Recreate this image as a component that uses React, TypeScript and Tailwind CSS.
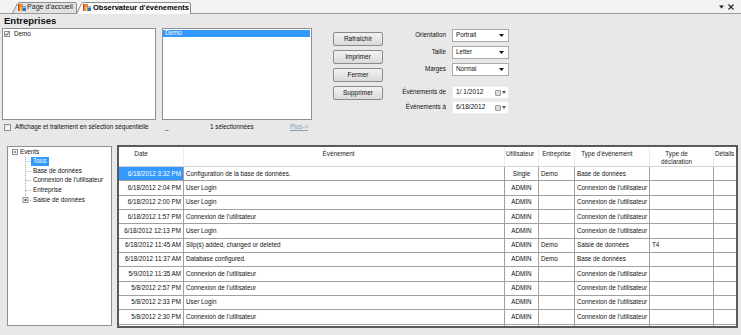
import React from "react";

type Row = { d: string; e: string; u: string; c: string; t: string; k: string; sel?: boolean };

const CONN = "Connexion de l'utilisateur";
const rows: Row[] = [
  { d: "6/18/2012 3:32 PM", e: "Configuration de la base de données.", u: "Single", c: "Demo", t: "Base de données", k: "", sel: true },
  { d: "6/18/2012 2:04 PM", e: "User Login", u: "ADMIN", c: "", t: CONN, k: "" },
  { d: "6/18/2012 2:00 PM", e: "User Login", u: "ADMIN", c: "", t: CONN, k: "" },
  { d: "6/18/2012 1:57 PM", e: CONN, u: "ADMIN", c: "", t: CONN, k: "" },
  { d: "6/18/2012 12:13 PM", e: "User Login", u: "ADMIN", c: "", t: CONN, k: "" },
  { d: "6/18/2012 11:45 AM", e: "Slip(s) added, changed or deleted", u: "ADMIN", c: "Demo", t: "Saisie de données", k: "T4" },
  { d: "6/18/2012 11:37 AM", e: "Database configured.", u: "ADMIN", c: "Demo", t: "Base de données", k: "" },
  { d: "5/9/2012 11:35 AM", e: CONN, u: "ADMIN", c: "", t: CONN, k: "" },
  { d: "5/8/2012 2:57 PM", e: CONN, u: "ADMIN", c: "", t: CONN, k: "" },
  { d: "5/8/2012 2:33 PM", e: "User Login", u: "ADMIN", c: "", t: CONN, k: "" },
  { d: "5/8/2012 2:30 PM", e: CONN, u: "ADMIN", c: "", t: CONN, k: "" },
  { d: "", e: "", u: "", c: "", t: "", k: "" },
];

function TabIcon() {
  return (
    <svg width="8" height="7" viewBox="0 0 8 7" className="shrink-0">
      <rect x="0" y="0" width="5" height="3.5" fill="#f08a24" />
      <rect x="0" y="3.5" width="5" height="3.5" fill="#f2c23a" />
      <rect x="0" y="0" width="1.5" height="7" fill="#d9452b" />
      <rect x="4.5" y="2.5" width="3.5" height="4.5" fill="#2f6fd0" />
      <rect x="5" y="3" width="2.5" height="1" fill="#9cc4f5" />
    </svg>
  );
}

function TabStrip() {
  return (
    <div className="h-[14px] bg-[#f3f3f3] border-b border-[#9a9a9a] flex items-end pl-[12px] relative">
      <div className="relative w-[65px] h-[11px] flex items-center">
        <svg width="65" height="11" viewBox="0 0 65 11" className="absolute left-0 top-0">
          <path d="M0.5 11 L5.5 1.5 Q6.5 0.5 8 0.5 L63 0.5 Q64.5 0.5 64.5 2 L64.5 11" fill="#e2e2e2" stroke="#8e8e8e" />
        </svg>
        <div className="relative flex items-center pl-[6px] gap-[1px] text-[7.1px] text-[#222]">
          <TabIcon />
          <span>Page d'accueil</span>
        </div>
      </div>
      <div className="relative -ml-[1px] -mb-px w-[115px] h-[12px] flex items-center">
        <svg width="115" height="12" viewBox="0 0 115 12" className="absolute left-0 top-0">
          <path d="M0.5 12 L5.5 1.5 Q6.5 0.5 8 0.5 L113 0.5 Q114.5 0.5 114.5 2 L114.5 12" fill="#fbfbfb" stroke="#8e8e8e" />
        </svg>
        <div className="relative flex items-center pl-[7px] gap-[2px] text-[7.5px] font-bold text-black -mt-px">
          <TabIcon />
          <span>Observateur d'événements</span>
        </div>
      </div>
      <div className="absolute right-[7px] top-[4px] flex items-center gap-[4px]">
        <svg width="5" height="4" viewBox="0 0 5 4"><path d="M0 0.5 L5 0.5 L2.5 3.5 Z" fill="#222" /></svg>
        <svg width="6" height="6" viewBox="0 0 6 6"><path d="M0.5 0.5 L5.5 5.5 M5.5 0.5 L0.5 5.5" stroke="#222" strokeWidth="1.1" /></svg>
      </div>
    </div>
  );
}

function Arrow() {
  return (
    <svg width="5" height="3" viewBox="0 0 5 3" className="shrink-0"><path d="M0 0 L5 0 L2.5 3 Z" fill="#111" /></svg>
  );
}

function Combo({ v }: { v: string }) {
  return (
    <div className="w-[57px] h-[13px] bg-white border border-[#a9a9a9] flex items-center pl-[3px] pr-[4px] justify-between">
      <span>{v}</span>
      <Arrow />
    </div>
  );
}

function DateField({ v }: { v: string }) {
  return (
    <div className="w-[57px] h-[13px] bg-white border border-[#ececec] flex items-center pl-[3px] pr-[2px]">
      <span className="text-[6.6px]">{v}</span>
      <div className="ml-auto flex items-center gap-[1px]">
        <div className="w-[6px] h-[6px] border border-[#9a9a9a] bg-[#dcdcdc] rounded-[1px]" />
        <svg width="4" height="3" viewBox="0 0 4 3"><path d="M0 0 L4 0 L2 3 Z" fill="#555" /></svg>
      </div>
    </div>
  );
}

function Btn({ t }: { t: string }) {
  return (
    <div className="w-[50px] h-[14px] border border-[#8a8a8a] rounded-[2px] bg-gradient-to-b from-[#f2f2f2] to-[#dadada] flex items-center justify-center text-[6.5px] text-[#111]">
      {t}
    </div>
  );
}

function TopSection() {
  return (
    <div>
      <div className="h-[14px] pl-[4px] text-[9.5px] font-bold leading-[13px] text-[#111]">Entreprises</div>
      <div className="flex h-[93px]">
        <div className="ml-[2px] w-[154px] h-[92px] bg-white border border-[#8c8f96]">
          <div className="flex items-center h-[6px] mt-[2px] ml-[1px] gap-[4px]">
            <div className="w-[6px] h-[6px] border border-[#8e8f8f] bg-[#f4f4f4] flex items-center justify-center">
              <svg width="4" height="4" viewBox="0 0 4 4"><path d="M0.4 2 L1.5 3.3 L3.6 0.5" stroke="#222" strokeWidth="0.8" fill="none" /></svg>
            </div>
            <span>Demo</span>
          </div>
        </div>
        <div className="ml-[6px] w-[150px] h-[92px] bg-white border border-[#8c8f96] pt-[1px] pr-[1px]">
          <div className="h-[7px] bg-[#3399ff] text-white flex items-center pl-[2px]">Demo</div>
        </div>
        <div className="ml-[21px] pt-[4px] flex flex-col gap-[4px]">
          <Btn t="Rafraîchir" />
          <Btn t="Imprimer" />
          <Btn t="Fermer" />
          <Btn t="Supprimer" />
        </div>
        <div className="pt-[1px] flex flex-col">
          <div className="flex items-center">
            <div className="w-[63px] text-right">Orientation</div>
            <div className="ml-[6px]"><Combo v="Portrait" /></div>
          </div>
          <div className="flex items-center mt-[4px]">
            <div className="w-[63px] text-right">Taille</div>
            <div className="ml-[6px]"><Combo v="Letter" /></div>
          </div>
          <div className="flex items-center mt-[4px]">
            <div className="w-[63px] text-right">Marges</div>
            <div className="ml-[6px]"><Combo v="Normal" /></div>
          </div>
          <div className="flex items-center mt-[10px]">
            <div className="w-[63px] text-right">Événements de</div>
            <div className="ml-[6px]"><DateField v="1/ 1/2012" /></div>
          </div>
          <div className="flex items-center mt-[2px]">
            <div className="w-[63px] text-right">Événements à</div>
            <div className="ml-[6px]"><DateField v="6/18/2012" /></div>
          </div>
        </div>
      </div>
      <div className="flex items-center h-[12px]">
        <div className="w-[162px] flex items-center">
          <div className="ml-[4px] w-[7px] h-[7px] border border-[#8e8f8f] bg-gradient-to-b from-[#e8e8e8] to-[#fafafa]" />
          <span className="ml-[4px] text-[#111]">Affichage et traitement en sélection séquentielle</span>
        </div>
        <div className="w-[48px] pl-[3px]">_</div>
        <div className="w-[80px]">1 sélectionnées</div>
        <div className="text-[#8a9bbf] underline">Plus-&gt;</div>
      </div>
    </div>
  );
}

function Tree() {
  const childRow = "h-[9.6px] flex items-center";
  return (
    <div className="relative ml-[7px] mt-[1px] w-[105px] h-[180px] bg-white border border-[#8c8f96]">
      <svg width="40" height="60" viewBox="0 0 40 60" className="absolute left-0 top-0">
        <g stroke="#a8a8a8" strokeWidth="1" strokeDasharray="1 1" fill="none">
          <path d="M17.5 10 L17.5 50.3" />
          <path d="M17.5 14.5 L23 14.5" />
          <path d="M17.5 24.5 L23 24.5" />
          <path d="M17.5 33.5 L23 33.5" />
          <path d="M17.5 43.5 L23 43.5" />
          <path d="M20 53.5 L23 53.5" />
        </g>
        <rect x="4.5" y="2.5" width="5" height="5" fill="#fff" stroke="#8e8e8e" />
        <path d="M5.8 5 L8.2 5" stroke="#333" />
        <rect x="15" y="50.5" width="5" height="5" fill="#fff" stroke="#8e8e8e" />
        <path d="M16.3 53 L18.7 53 M17.5 51.8 L17.5 54.2" stroke="#333" />
      </svg>
      <div className="relative">
        <div className={childRow + " pl-[12px]"}>Events</div>
        <div className={childRow + " pl-[23px]"}>
          <span className="bg-[#3399ff] text-white h-[8.5px] w-[18px] flex items-center pl-[2px]">Tous</span>
        </div>
        <div className={childRow + " pl-[25px]"}>Base de données</div>
        <div className={childRow + " pl-[25px]"}>Connexion de l'utilisateur</div>
        <div className={childRow + " pl-[25px]"}>Entreprise</div>
        <div className={childRow + " pl-[25px]"}>Saisie de données</div>
      </div>
    </div>
  );
}

function Grid() {
  const cell = "h-full border-r border-b border-[#a0a0a0] flex items-center overflow-hidden whitespace-nowrap shrink-0";
  const hcell = "h-full border-r border-[#ececec] flex justify-center pt-[3px] leading-[7.5px] text-center shrink-0 text-[#222]";
  return (
    <div className="ml-[5px] w-[621px] h-[183px] border-2 border-[#5a5a5a] bg-white overflow-hidden">
      <div className="h-[20px] flex border-b border-[#d4d4d4]">
        <div className={hcell + " w-[65px] pr-[20px]"}>Date</div>
        <div className={hcell + " w-[321px] pr-[11px]"}>Événement</div>
        <div className={hcell + " w-[34px] pr-[3px]"}>Utilisateur</div>
        <div className={hcell + " w-[36px]"}>Entreprise</div>
        <div className={hcell + " w-[75px] pr-[10px]"}>Type d'événement</div>
        <div className={hcell + " w-[64px] pr-[10px]"}>Type de<br />déclaration</div>
        <div className="h-full pt-[3px] pl-[1px] leading-[7.5px] text-[#222]">Détails</div>
      </div>
      {rows.map((r, i) => (
        <div key={i} className="h-[14.33px] flex">
          <div className={cell + " w-[65px] justify-end pr-[2px] " + (r.sel ? "bg-[#3399ff] text-white" : "")}>{r.d}</div>
          <div className={cell + " w-[321px] pl-[2px]"}>{r.e}</div>
          <div className={cell + " w-[34px] justify-center"}>{r.u}</div>
          <div className={cell + " w-[36px] pl-[2px]"}>{r.c}</div>
          <div className={cell + " w-[75px] pl-[2px]"}>{r.t}</div>
          <div className={cell + " w-[64px] pl-[2px]"}>{r.k}</div>
          <div className="h-full flex-1 border-b border-[#a0a0a0]" />
        </div>
      ))}
    </div>
  );
}

export default function App() {
  return (
    <div className="w-[741px] h-[335px] overflow-hidden bg-[#e8e8e8] font-['Liberation_Sans',Arial,sans-serif] text-[6.3px] leading-none text-[#111]">
      <TabStrip />
      <TopSection />
      <div className="flex mt-[12px]">
        <Tree />
        <Grid />
      </div>
    </div>
  );
}
